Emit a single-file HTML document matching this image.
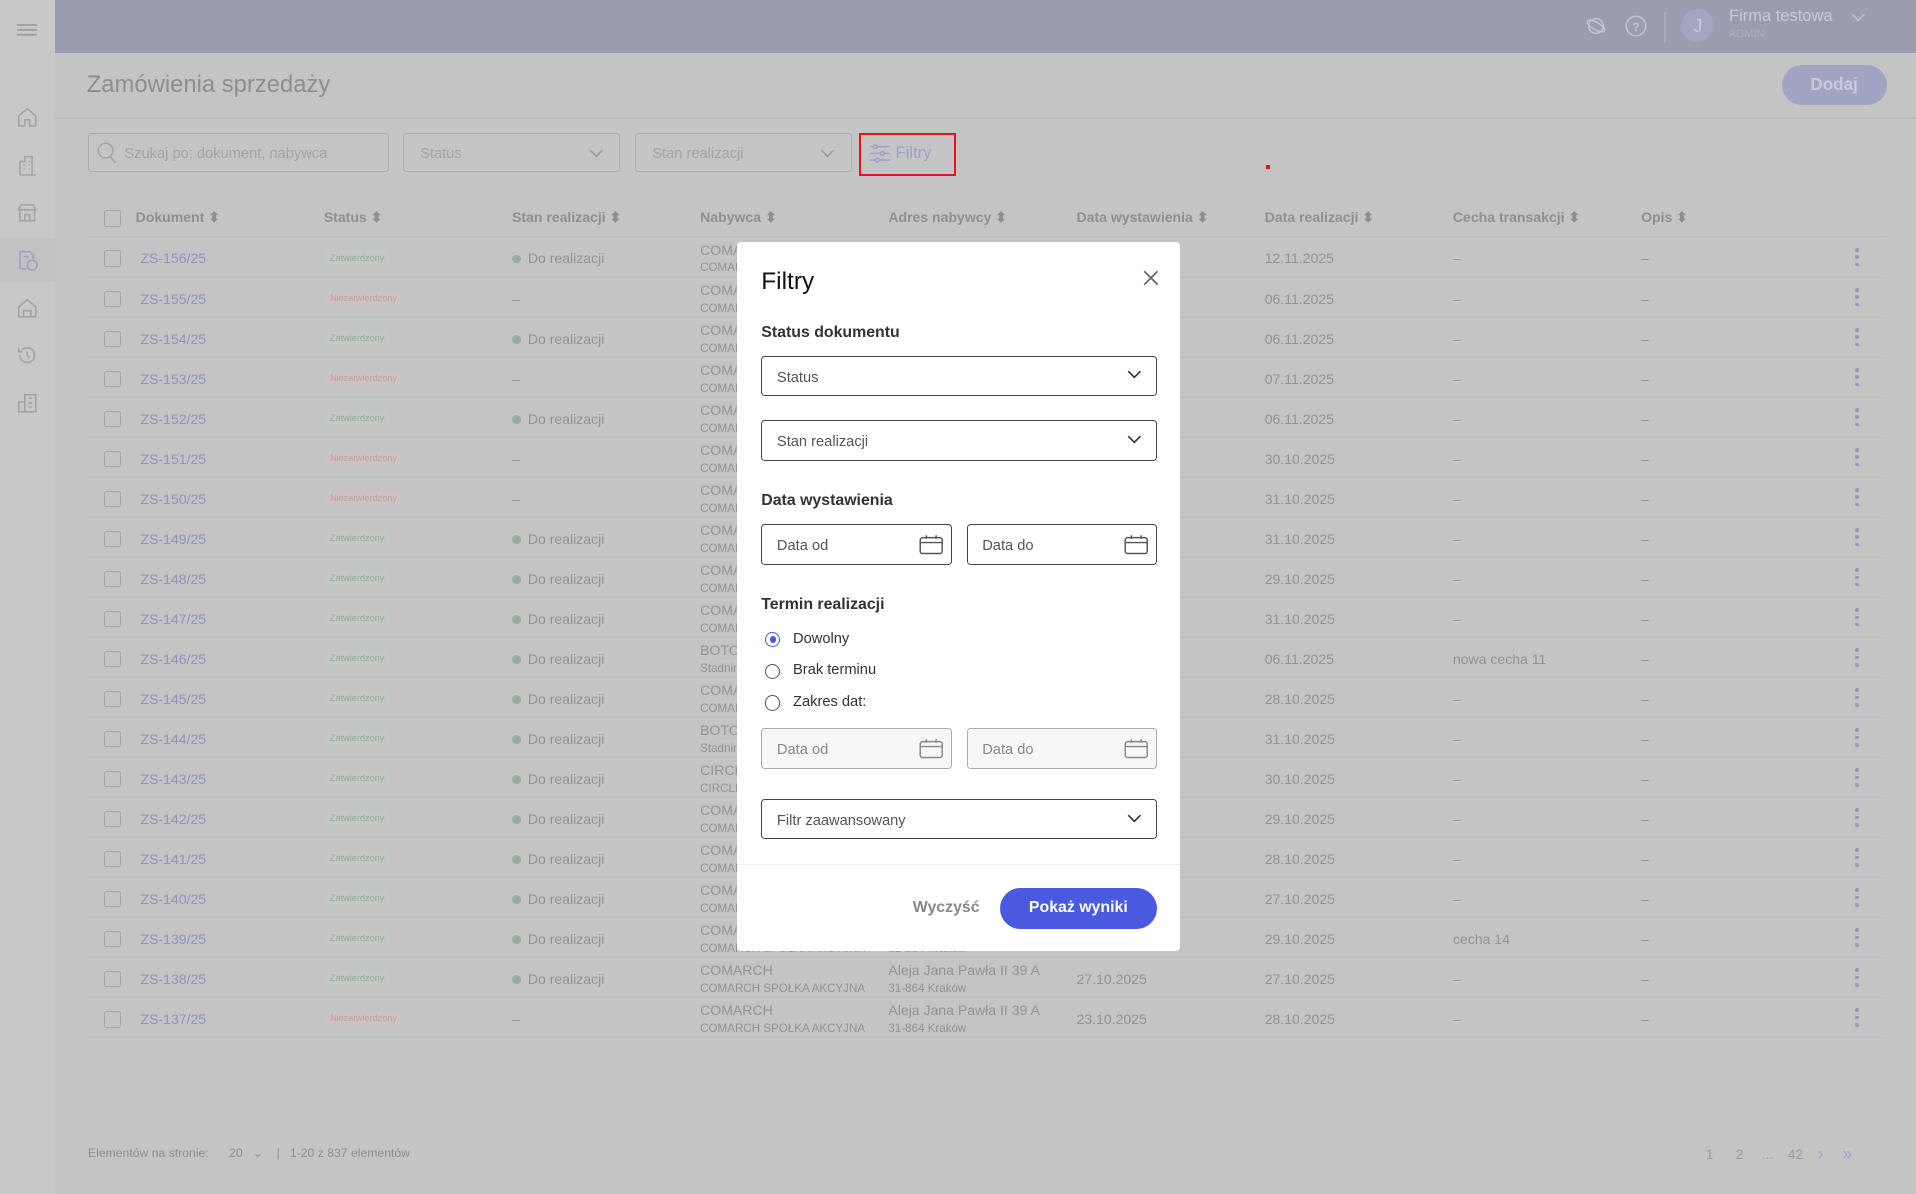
<!DOCTYPE html>
<html><head><meta charset="utf-8"><style>
html,body{margin:0;padding:0;}
body{width:1568px;height:977px;zoom:1.22194;overflow:hidden;background:#c4c4c4;font-family:"Liberation Sans",sans-serif;position:relative;color:#939393;}
.abs{position:absolute;}
.side{left:0;top:0;width:45px;height:977px;background:#c8c8c8;}
.top{left:45px;top:0;width:1523px;height:43px;background:#9a9db0;}
.ico{position:absolute;left:12px;width:20px;height:20px;}
.inp{position:absolute;top:109px;height:32px;border:1px solid #a9a9a9;border-radius:3px;box-sizing:border-box;font-size:12px;color:#a3a3a3;line-height:34px;}
.th{position:absolute;top:171px;font-size:11.5px;font-weight:bold;color:#8f8f8f;}
.row{position:absolute;left:72px;width:1472px;height:32.7px;border-bottom:1px solid #bcbcbc;font-size:11.5px;}
.row span{position:absolute;}
.cb{position:absolute;left:13px;width:12px;height:12px;border:1px solid #a5a5a5;border-radius:2px;}
.pill{font-size:7.5px;padding:2px 5px;border-radius:8px;}
.ok{background:#c2c9c3;color:#94a898;}
.no{background:#cdc2c2;color:#c09e9e;}
.dot{width:7px;height:7px;border-radius:50%;background:#96ae9c;display:inline-block;margin-right:6px;}
.link{color:#8f93bd;}
.kb{position:absolute;left:1446px;width:4px;}
.kb i{display:block;width:3px;height:3px;border-radius:50%;background:#9397bf;margin:0 0 3px;}
.modal{left:603px;top:198px;width:363px;height:580px;background:#fff;border-radius:3px;color:#222;}
.mf{position:absolute;left:20px;width:324px;height:33px;border:1px solid #444;border-radius:3px;box-sizing:border-box;font-size:12px;color:#555;line-height:35px;padding-left:12px;}
.mh{position:absolute;left:20px;font-size:13px;font-weight:bold;color:#333;}
.chev{position:absolute;right:12px;top:11px;}
.cal{position:absolute;right:6px;top:7px;}
.rad{position:absolute;left:23px;width:11px;height:11px;border:1px solid #555;border-radius:50%;}
.rl{position:absolute;left:46px;font-size:12px;color:#333;}
</style></head><body>
<div class="abs side"></div>
<div class="abs" style="left:14px;top:20px;width:16px;height:1.5px;background:#a0a0a0;box-shadow:0 4px 0 #a0a0a0,0 8px 0 #a0a0a0;"></div>
<svg class="ico" style="top:86px" viewBox="0 0 20 20" fill="none" stroke="#a3a3a3" stroke-width="1.3"><path d="M3 9 10 3 17 9V17H12V12H8V17H3Z"/></svg>
<svg class="ico" style="top:125px" viewBox="0 0 20 20" fill="none" stroke="#a3a3a3" stroke-width="1.3"><path d="M4 18V7H8V3H14V18M4 18H17M7 10h1M11 7h1M11 10h1M11 13h1M7 13h1"/></svg>
<svg class="ico" style="top:164px" viewBox="0 0 20 20" fill="none" stroke="#a3a3a3" stroke-width="1.3"><path d="M3 8H17L15 4H5ZM4 8V17H16V8M8 17V12H12V17"/></svg>
<div class="abs" style="left:0;top:195px;width:45px;height:36px;background:#c2c2c2"></div>
<svg class="ico" style="top:203px" viewBox="0 0 20 20" fill="none" stroke="#9da0c2" stroke-width="1.3"><path d="M4 17V3H12L15 6V9M9 17H4M7 7h4"/><circle cx="14" cy="14" r="4"/></svg>
<svg class="ico" style="top:242px" viewBox="0 0 20 20" fill="none" stroke="#a3a3a3" stroke-width="1.3"><path d="M3 9 10 3 17 9V17H3ZM7 17V12H13V17"/></svg>
<svg class="ico" style="top:281px" viewBox="0 0 20 20" fill="none" stroke="#a3a3a3" stroke-width="1.3"><path d="M4 10A6 6 0 1 0 6 5.5M3 4V7H6M10 7V10L12 12"/></svg>
<svg class="ico" style="top:320px" viewBox="0 0 20 20" fill="none" stroke="#a3a3a3" stroke-width="1.3"><path d="M3 17V9H8V17ZM8 17V3H17V17ZM11 6h3M11 10h3M11 13h3"/></svg>

<div class="abs top"></div>
<svg class="abs" style="left:1297px;top:12px" width="18" height="18" viewBox="0 0 18 18" fill="none" stroke="#c2c4d2" stroke-width="1.2"><circle cx="9" cy="9" r="6"/><ellipse cx="9" cy="9" rx="8" ry="3" transform="rotate(30 9 9)"/></svg>
<svg class="abs" style="left:1330px;top:12px" width="18" height="18" viewBox="0 0 18 18" fill="none" stroke="#c2c4d2" stroke-width="1.2"><circle cx="9" cy="9" r="8"/><text x="9" y="13" font-size="10" text-anchor="middle" fill="#c2c4d2" stroke="none" font-family="Liberation Sans" font-weight="bold">?</text></svg>
<div class="abs" style="left:1362px;top:10px;width:1px;height:25px;background:#a9abbd"></div>
<div class="abs" style="left:1376px;top:7px;width:27px;height:27px;border-radius:50%;background:#a3a5c1;color:#c8c9da;font-size:15px;text-align:center;line-height:27px">J</div>
<div class="abs" style="left:1415px;top:6px;font-size:13.5px;color:#c8cad6">Firma testowa</div>
<div class="abs" style="left:1415px;top:23px;font-size:9px;color:#adb0c0">ADMIN</div>
<svg class="abs" style="left:1515px;top:11px" width="12" height="8" viewBox="0 0 12 8" fill="none" stroke="#c2c4d2" stroke-width="1.3"><path d="M1 1 6 6 11 1"/></svg>

<div class="abs" style="left:71px;top:58px;font-size:19.5px;color:#8e8e8e">Zamówienia sprzedaży</div>
<div class="abs" style="left:1458px;top:53px;width:86px;height:33px;border-radius:17px;background:#a1a4c3;color:#c9cbdb;font-size:14px;font-weight:bold;text-align:center;line-height:33px">Dodaj</div>
<div class="abs" style="left:45px;top:96px;width:1523px;height:1px;background:#bdbdbd"></div>

<div class="inp" style="left:72px;width:246px;padding-left:29px">Szukaj po: dokument, nabywca</div>
<svg class="abs" style="left:79px;top:116px" width="17" height="18" viewBox="0 0 17 18" fill="none" stroke="#a3a3a3" stroke-width="1.2"><circle cx="7" cy="7" r="6"/><path d="M11 12 15 17"/></svg>
<div class="inp" style="left:330px;width:177px;padding-left:13px">Status</div>
<svg class="abs" style="left:482px;top:122px" width="12" height="8" viewBox="0 0 12 8" fill="none" stroke="#9a9a9a" stroke-width="1.3"><path d="M1 1 6 6 11 1"/></svg>
<div class="inp" style="left:520px;width:177px;padding-left:13px">Stan realizacji</div>
<svg class="abs" style="left:671px;top:122px" width="12" height="8" viewBox="0 0 12 8" fill="none" stroke="#9a9a9a" stroke-width="1.3"><path d="M1 1 6 6 11 1"/></svg>
<div class="abs" style="left:703px;top:109px;width:76px;height:32px;border:2px solid #e5141c"></div>
<svg class="abs" style="left:711px;top:117px" width="18" height="17" viewBox="0 0 18 17" fill="none" stroke="#9da0c6" stroke-width="1.2"><path d="M1 3H17M1 8.5H17M1 14H17"/><circle cx="5" cy="3" r="1.5" fill="#c4c4c4"/><circle cx="11" cy="8.5" r="1.5" fill="#c4c4c4"/><circle cx="7" cy="14" r="1.5" fill="#c4c4c4"/></svg>
<div class="abs" style="left:733px;top:118px;font-size:13.5px;color:#9da0c6">Filtry</div>
<div class="abs" style="left:1036px;top:135px;width:3px;height:3px;background:#e5141c"></div>

<div class="cb" style="left:85px;top:172px"></div>
<div class="th" style="left:111px">Dokument ⬍</div>
<div class="th" style="left:265px">Status ⬍</div>
<div class="th" style="left:419px">Stan realizacji ⬍</div>
<div class="th" style="left:573px">Nabywca ⬍</div>
<div class="th" style="left:727px">Adres nabywcy ⬍</div>
<div class="th" style="left:881px">Data wystawienia ⬍</div>
<div class="th" style="left:1035px">Data realizacji ⬍</div>
<div class="th" style="left:1189px">Cecha transakcji ⬍</div>
<div class="th" style="left:1343px">Opis ⬍</div>
<div class="abs" style="left:72px;top:193px;width:1472px;height:1px;background:#bcbcbc"></div>

<div id="rows"></div>
<script>
var d=[["156",1,"12.11.2025","–"],["155",0,"06.11.2025","–"],["154",1,"06.11.2025","–"],["153",0,"07.11.2025","–"],["152",1,"06.11.2025","–"],["151",0,"30.10.2025","–"],["150",0,"31.10.2025","–"],["149",1,"31.10.2025","–"],["148",1,"29.10.2025","–"],["147",1,"31.10.2025","–"],["146",1,"06.11.2025","nowa cecha 11","BOTO","Stadnin"],["145",1,"28.10.2025","–"],["144",1,"31.10.2025","–","BOTO","Stadnin"],["143",1,"30.10.2025","–","CIRCL","CIRCLE"],["142",1,"29.10.2025","–"],["141",1,"28.10.2025","–"],["140",1,"27.10.2025","–"],["139",1,"29.10.2025","cecha 14"],["138",1,"27.10.2025","–"],["137",0,"28.10.2025","–"]];
var h="";
d.forEach(function(r,i){var t=194+i*32.75;var n1=r[4]||"COMARCH",n2=r[5]||"COMARCH SPÓŁKA AKCYJNA";
h+='<div class="row" style="top:'+t+'px"><div class="cb" style="top:11px"></div>'+
'<span class="link" style="left:43px;top:11px">ZS-'+r[0]+'/25</span>'+
'<span style="left:193px;top:11px" class="pill '+(r[1]?'ok':'no')+'">'+(r[1]?'Zatwierdzony':'Niezatwierdzony')+'</span>'+
'<span style="left:347px;top:11px">'+(r[1]?'<i class="dot"></i>Do realizacji':'–')+'</span>'+
'<span style="left:501px;top:4px">'+n1+'</span><span style="left:501px;top:20px;font-size:9.5px">'+n2+'</span>'+
'<span style="left:655px;top:4px">Aleja Jana Pawła II 39 A</span><span style="left:655px;top:20px;font-size:9.5px">31-864 Kraków</span>'+
'<span style="left:809px;top:11px">'+(i==19?'23.10.2025':'27.10.2025')+'</span>'+
'<span style="left:963px;top:11px">'+r[2]+'</span><span style="left:1117px;top:11px">'+r[3]+'</span><span style="left:1271px;top:11px">–</span>'+
'<div class="kb" style="top:9px"><i></i><i></i><i></i></div></div>';});
document.getElementById("rows").innerHTML=h;
</script>

<div class="abs" style="left:72px;top:938px;font-size:10px;color:#8e8e8e">Elementów na stronie: &nbsp;&nbsp;&nbsp;&nbsp;&nbsp;20 &nbsp;&nbsp;⌄&nbsp;&nbsp;&nbsp;&nbsp;|&nbsp;&nbsp; 1-20 z 837 elementów</div>
<div class="abs" style="left:1396px;top:936px;font-size:11px;color:#999">1 &nbsp;&nbsp;&nbsp;&nbsp;&nbsp;2 &nbsp;&nbsp;&nbsp;&nbsp;... &nbsp;&nbsp;&nbsp;42 &nbsp;&nbsp;&nbsp;<span style="color:#9da0c6;font-size:14px">›&nbsp;&nbsp;&nbsp;&nbsp;»</span></div>

<div class="abs modal">
<div class="abs" style="left:20px;top:21px;font-size:20px;color:#111">Filtry</div>
<svg class="abs" style="left:332px;top:23px" width="13" height="13" viewBox="0 0 13 13" stroke="#666" stroke-width="1.4"><path d="M1 1 12 12M12 1 1 12"/></svg>
<div class="mh" style="top:67px">Status dokumentu</div>
<div class="mf" style="top:93px">Status<svg class="chev" width="12" height="8" viewBox="0 0 12 8" fill="none" stroke="#333" stroke-width="1.3"><path d="M1 1 6 6 11 1"/></svg></div>
<div class="mf" style="top:146px">Stan realizacji<svg class="chev" width="12" height="8" viewBox="0 0 12 8" fill="none" stroke="#333" stroke-width="1.3"><path d="M1 1 6 6 11 1"/></svg></div>
<div class="mh" style="top:205px">Data wystawienia</div>
<div class="mf" style="top:231px;width:156px">Data od<svg class="cal" width="20" height="17" viewBox="0 0 20 17" fill="none" stroke="#555" stroke-width="1.2"><rect x="1" y="3" width="18" height="13" rx="2"/><path d="M1 7H19M6 1V4M14 1V4"/></svg></div>
<div class="mf" style="top:231px;left:188px;width:156px">Data do<svg class="cal" width="20" height="17" viewBox="0 0 20 17" fill="none" stroke="#555" stroke-width="1.2"><rect x="1" y="3" width="18" height="13" rx="2"/><path d="M1 7H19M6 1V4M14 1V4"/></svg></div>
<div class="mh" style="top:290px">Termin realizacji</div>
<div class="rad" style="top:319px;border-color:#4a5ae0"><div style="width:5px;height:5px;border-radius:50%;background:#4a5ae0;margin:3px"></div></div><div class="rl" style="top:318px">Dowolny</div>
<div class="rad" style="top:345px"></div><div class="rl" style="top:344px">Brak terminu</div>
<div class="rad" style="top:371px"></div><div class="rl" style="top:370px">Zakres dat:</div>
<div class="mf" style="top:398px;width:156px;background:#f6f7f9;border-color:#aaa;color:#888">Data od<svg class="cal" width="20" height="17" viewBox="0 0 20 17" fill="none" stroke="#888" stroke-width="1.2"><rect x="1" y="3" width="18" height="13" rx="2"/><path d="M1 7H19M6 1V4M14 1V4"/></svg></div>
<div class="mf" style="top:398px;left:188px;width:156px;background:#f6f7f9;border-color:#aaa;color:#888">Data do<svg class="cal" width="20" height="17" viewBox="0 0 20 17" fill="none" stroke="#888" stroke-width="1.2"><rect x="1" y="3" width="18" height="13" rx="2"/><path d="M1 7H19M6 1V4M14 1V4"/></svg></div>
<div class="mf" style="top:456px">Filtr zaawansowany<svg class="chev" width="12" height="8" viewBox="0 0 12 8" fill="none" stroke="#333" stroke-width="1.3"><path d="M1 1 6 6 11 1"/></svg></div>
<div class="abs" style="left:0;top:509px;width:363px;height:1px;background:#eee"></div>
<div class="abs" style="left:144px;top:538px;font-size:13px;font-weight:bold;color:#888">Wyczyść</div>
<div class="abs" style="left:215px;top:529px;width:129px;height:33px;border-radius:17px;background:#4a5ae0;color:#fff;font-size:13px;font-weight:bold;text-align:center;line-height:33px">Pokaż wyniki</div>
</div>
</body></html>
